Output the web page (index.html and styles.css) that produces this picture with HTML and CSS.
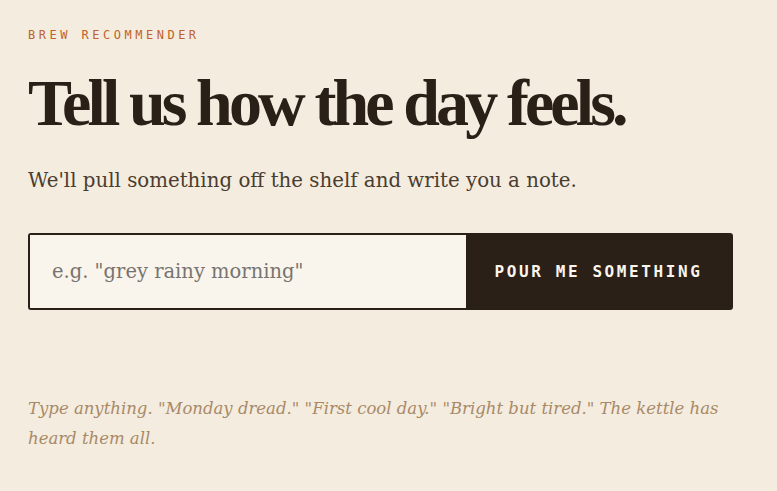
FILE: index.html
```html
<!DOCTYPE html>
<html>
<head>
<meta charset="utf-8">
<link rel="stylesheet" href="styles.css">
</head>
<body>
<main class="page">
  <p class="eyebrow">BREW RECOMMENDER</p>
  <h1 class="title">Tell us how the day feels.</h1>
  <p class="lede">We'll pull something off the shelf and write you a note.</p>
  <form class="ask">
    <input class="ask-input" type="text" placeholder="e.g. &quot;grey rainy morning&quot;">
    <button class="ask-btn" type="button">POUR ME SOMETHING</button>
  </form>
  <p class="hint">Type anything. "Monday dread." "First cool day." "Bright but tired." The kettle has heard them all.</p>
</main>
</body>
</html>
```
FILE: styles.css
```css
html, body {
  margin: 0;
  padding: 0;
  background: #f4ecdf;
}
.page {
  padding: 27px 28px 0 28px;
  width: 705px;
}
.eyebrow {
  margin: 0;
  font-family: "DejaVu Sans Mono", monospace;
  font-size: 12px;
  letter-spacing: 3.5px;
  color: #c0622a;
  line-height: 16px;
}
.title {
  margin: 25px 0 0 0;
  font-family: "Liberation Serif", serif;
  font-weight: bold;
  font-size: 66px;
  line-height: 70px;
  letter-spacing: -3.9px;
  color: #2a2018;
  white-space: nowrap;
}
.lede {
  margin: 29px 0 0 0;
  font-family: "DejaVu Serif", serif;
  font-size: 19.8px;
  line-height: 28px;
  color: #4a3d30;
}
.ask {
  margin: 38px 0 0 0;
  display: flex;
  border: 2px solid #2a2018;
  border-radius: 3px;
  height: 73px;
  box-sizing: content-box;
}
.ask-input {
  flex: 1;
  border: none;
  background: #faf5ec;
  padding: 0 0 0 22px;
  font-family: "DejaVu Serif", serif;
  font-size: 19.5px;
  color: #2a2018;
  outline: none;
}
.ask-input::placeholder {
  color: #777470;
}
.ask-btn {
  width: 265px;
  border: none;
  background: #2a2018;
  color: #faf5ec;
  font-family: "DejaVu Sans Mono", monospace;
  font-weight: bold;
  font-size: 16px;
  letter-spacing: 2.6px;
  padding: 0;
}
.hint {
  margin: 84px 0 0 0;
  font-family: "DejaVu Serif", serif;
  font-style: italic;
  font-size: 16.5px;
  line-height: 30px;
  color: #a88a68;
}
```
